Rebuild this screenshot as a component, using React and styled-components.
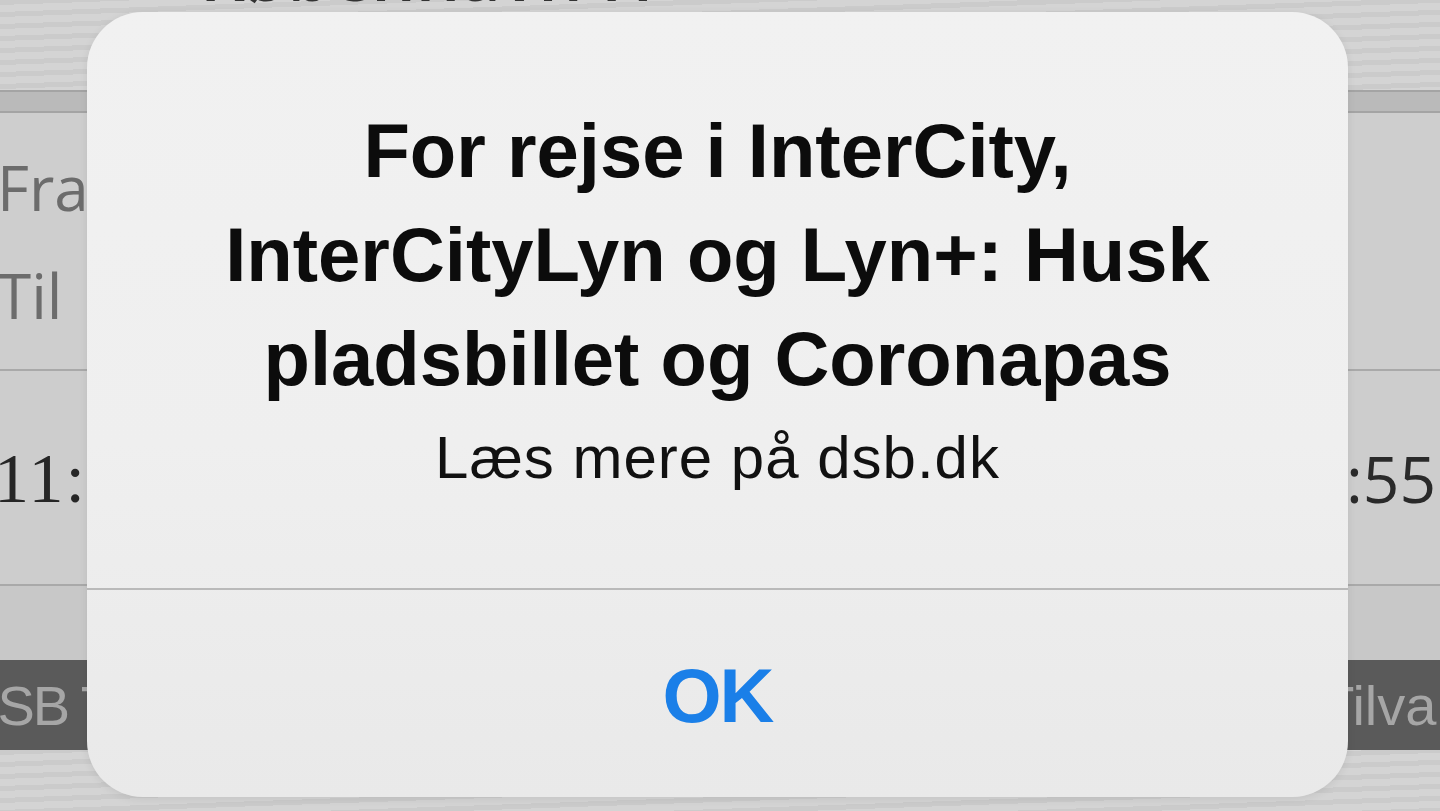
import styled, { createGlobalStyle } from "styled-components"

const Global = createGlobalStyle`
    html, body {
        margin: 0;
        padding: 0;
        width: 1440px;
        height: 811px;
        overflow: hidden;
        background: #d0d0d0;
    }
    * {
        box-sizing: border-box;
    }
`

export default function App () {
    return (
        <Screen>
            <Global />
            <Backdrop>
                <Header>
                    <Station>København H</Station>
                </Header>
                <Band />
                <Stations>
                    <FieldLabel>Fra</FieldLabel>
                    <FieldLabel>Til</FieldLabel>
                </Stations>
                <TimeRow>
                    <DepartTime>11:25</DepartTime>
                    <ArriveTime>12:55</ArriveTime>
                </TimeRow>
                <EmptyRow />
                <OfferBar>
                    <OfferText side="left">DSB Tilbud</OfferText>
                    <OfferText side="right">Tilvalg</OfferText>
                </OfferBar>
                <Footer />
            </Backdrop>

            <Alert>
                <AlertBody>
                    <AlertTitle>
                        For rejse i InterCity,<br />
                        InterCityLyn og Lyn+: Husk<br />
                        pladsbillet og Coronapas
                    </AlertTitle>
                    <AlertMessage>Læs mere på dsb.dk</AlertMessage>
                </AlertBody>
                <AlertButton>OK</AlertButton>
            </Alert>
        </Screen>
    )
}

const Screen = styled.div`
    position: relative;
    width: 1440px;
    height: 811px;
    overflow: hidden;
    font-family: "Liberation Sans", Arial, sans-serif;
`

const Backdrop = styled.div`
    display: flex;
    flex-direction: column;
    height: 811px;
`

const contour = `
    repeating-linear-gradient(
        178deg,
        #cbcbcb 0px,
        #cbcbcb 5px,
        #d4d4d4 5px,
        #d4d4d4 12px
    )
`

const Header = styled.div`
    height: 90px;
    overflow: hidden;
    background: ${contour};
    padding-left: 200px;
`

const Station = styled.div`
    margin-top: -61px;
    font-size: 70px;
    font-weight: 600;
    line-height: 70px;
    color: #333;
    font-family: "Open Sans", "Liberation Sans", sans-serif;
`

const Band = styled.div`
    height: 23px;
    background: #bababa;
    border-top: 2px solid #a4a4a4;
    border-bottom: 2px solid #a4a4a4;
`

const Stations = styled.div`
    height: 258px;
    background: #cecece;
    display: flex;
    flex-direction: column;
    padding-top: 20px;
    border-bottom: 2px solid #a9a9a9;
`

const FieldLabel = styled.div`
    height: 108px;
    font-family: "Open Sans", "Liberation Sans", sans-serif;
    font-size: 62px;
    line-height: 108px;
    color: #6c6c6c;
    margin-left: -3px;
`

const TimeRow = styled.div`
    height: 215px;
    background: #cdcdcd;
    display: flex;
    justify-content: space-between;
    align-items: flex-start;
    padding-top: 68px;
    border-bottom: 2px solid #a9a9a9;
`

const DepartTime = styled.div`
    font-family: "Liberation Serif", serif;
    font-size: 70px;
    line-height: 80px;
    letter-spacing: 2px;
    color: #262626;
    margin-left: -6px;
`

const ArriveTime = styled.div`
    font-family: "Open Sans", "Liberation Sans", sans-serif;
    font-size: 64px;
    line-height: 80px;
    color: #2a2a2a;
    margin-right: 4px;
`

const EmptyRow = styled.div`
    height: 74px;
    background: #c8c8c8;
`

const OfferBar = styled.div`
    height: 90px;
    background: #5a5a5a;
    display: flex;
    justify-content: space-between;
    align-items: center;
    overflow: hidden;
`

const OfferText = styled.div`
    font-family: "Liberation Sans", sans-serif;
    font-size: 56px;
    letter-spacing: ${props => props.side === "left" ? "-2px" : "0"};
    color: #a6a6a6;
    white-space: nowrap;
    flex-shrink: 0;
    margin-left: ${props => props.side === "left" ? "-41px" : "0"};
    margin-right: ${props => props.side === "right" ? "-40px" : "0"};
`

const Footer = styled.div`
    flex: 1;
    background: ${contour};
`

const Alert = styled.div`
    position: absolute;
    left: 87px;
    top: 12px;
    width: 1261px;
    height: 785px;
    border-radius: 56px;
    background: linear-gradient(180deg, #f1f1f1 0%, #efefef 55%, #e9e9e9 100%);
    box-shadow: 0 2px 8px rgba(0, 0, 0, 0.08);
    display: flex;
    flex-direction: column;
    overflow: hidden;
`

const AlertBody = styled.div`
    height: 578px;
    padding-top: 87px;
    display: flex;
    flex-direction: column;
    align-items: center;
    text-align: center;
    border-bottom: 2px solid #b9b9b9;
`

const AlertTitle = styled.div`
    font-size: 76px;
    font-weight: 700;
    line-height: 104px;
    color: #0c0c0c;
`

const AlertMessage = styled.div`
    margin-top: 11px;
    font-size: 60px;
    line-height: 72px;
    letter-spacing: 1px;
    color: #111;
`

const AlertButton = styled.div`
    flex: 1;
    display: flex;
    align-items: center;
    justify-content: center;
    padding-top: 4px;
    font-size: 76px;
    font-weight: 700;
    line-height: 76px;
    letter-spacing: -2px;
    color: #1a7fe8;
`
